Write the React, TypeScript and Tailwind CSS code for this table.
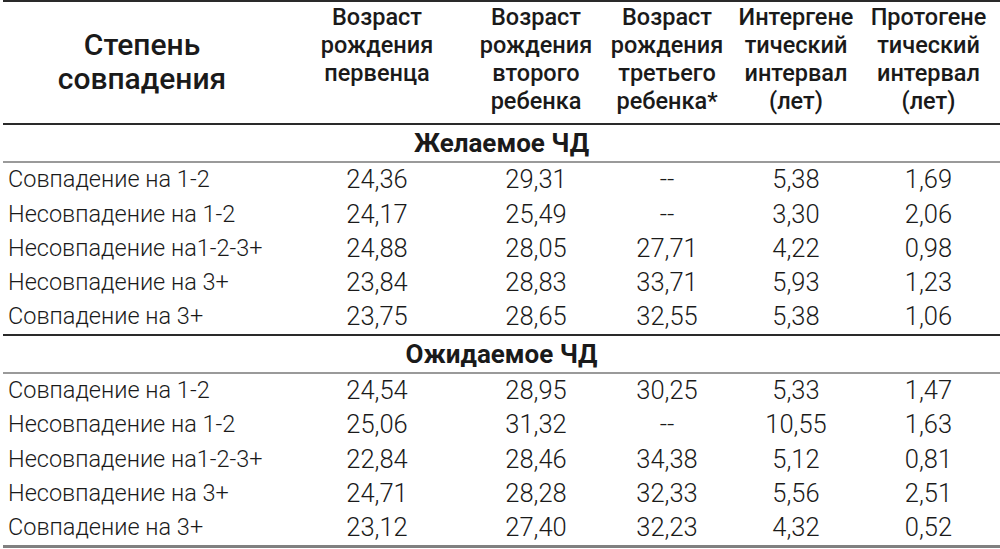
import React from "react";

const cols = "grid grid-cols-[278px_192px_126px_136px_122px_143px]";

type Row = [string, string, string, string, string, string];

const desired: Row[] = [
  ["Совпадение на 1-2", "24,36", "29,31", "--", "5,38", "1,69"],
  ["Несовпадение на 1-2", "24,17", "25,49", "--", "3,30", "2,06"],
  ["Несовпадение на1-2-3+", "24,88", "28,05", "27,71", "4,22", "0,98"],
  ["Несовпадение на 3+", "23,84", "28,83", "33,71", "5,93", "1,23"],
  ["Совпадение на 3+", "23,75", "28,65", "32,55", "5,38", "1,06"],
];

const expected: Row[] = [
  ["Совпадение на 1-2", "24,54", "28,95", "30,25", "5,33", "1,47"],
  ["Несовпадение на 1-2", "25,06", "31,32", "--", "10,55", "1,63"],
  ["Несовпадение на1-2-3+", "22,84", "28,46", "34,38", "5,12", "0,81"],
  ["Несовпадение на 3+", "24,71", "28,28", "32,33", "5,56", "2,51"],
  ["Совпадение на 3+", "23,12", "27,40", "32,23", "4,32", "0,52"],
];

const headers: string[][] = [
  ["Возраст", "рождения", "первенца"],
  ["Возраст", "рождения", "второго", "ребенка"],
  ["Возраст", "рождения", "третьего", "ребенка*"],
  ["Интергене", "тический", "интервал", "(лет)"],
  ["Протогене", "тический", "интервал", "(лет)"],
];

function DataRows({ rows }: { rows: Row[] }) {
  return (
    <>
      {rows.map((r, i) => (
        <div key={i} className={`${cols} h-[34.2px] items-center font-light leading-none`}>
          <div className="pl-[5px] whitespace-nowrap text-[23.5px]">{r[0]}</div>
          {r.slice(1).map((v, j) => (
            <div key={j} className="text-center whitespace-nowrap text-[25.5px]">
              {v}
            </div>
          ))}
        </div>
      ))}
    </>
  );
}

function Section({ title }: { title: string }) {
  return (
    <div className="h-[36px] flex items-center justify-center text-[26px] font-bold leading-none">
      {title}
    </div>
  );
}

export default function App() {
  return (
    <div
      className="w-[1000px] h-[549px] bg-white text-[#1a1a1a] overflow-hidden"
      style={{ fontFamily: "Roboto, 'Noto Sans', sans-serif" }}
    >
      <div className="ml-[3px] w-[997px] flex flex-col">
        <div className="h-[2px] bg-[#2a2a2a]" />
        <div className={`${cols} h-[121px]`}>
          <div className="flex flex-col items-center justify-center text-[30px] font-medium leading-[34px] pb-[2px]">
            <span>Степень</span>
            <span>совпадения</span>
          </div>
          {headers.map((h, i) => (
            <div key={i} className="flex flex-col items-center pt-[1px] text-[23.5px] font-medium leading-[28px]">
              {h.map((l, j) => (
                <span key={j} className="whitespace-nowrap">
                  {l}
                </span>
              ))}
            </div>
          ))}
        </div>
        <div className="h-[2px] bg-[#2a2a2a]" />
        <Section title="Желаемое ЧД" />
        <div className="h-[2px] bg-[#9a9a9a]" />
        <DataRows rows={desired} />
        <div className="h-[2px] bg-[#2a2a2a]" />
        <Section title="Ожидаемое ЧД" />
        <div className="h-[2px] bg-[#9a9a9a]" />
        <DataRows rows={expected} />
        <div className="h-[3px] bg-[#808080]" />
      </div>
    </div>
  );
}
